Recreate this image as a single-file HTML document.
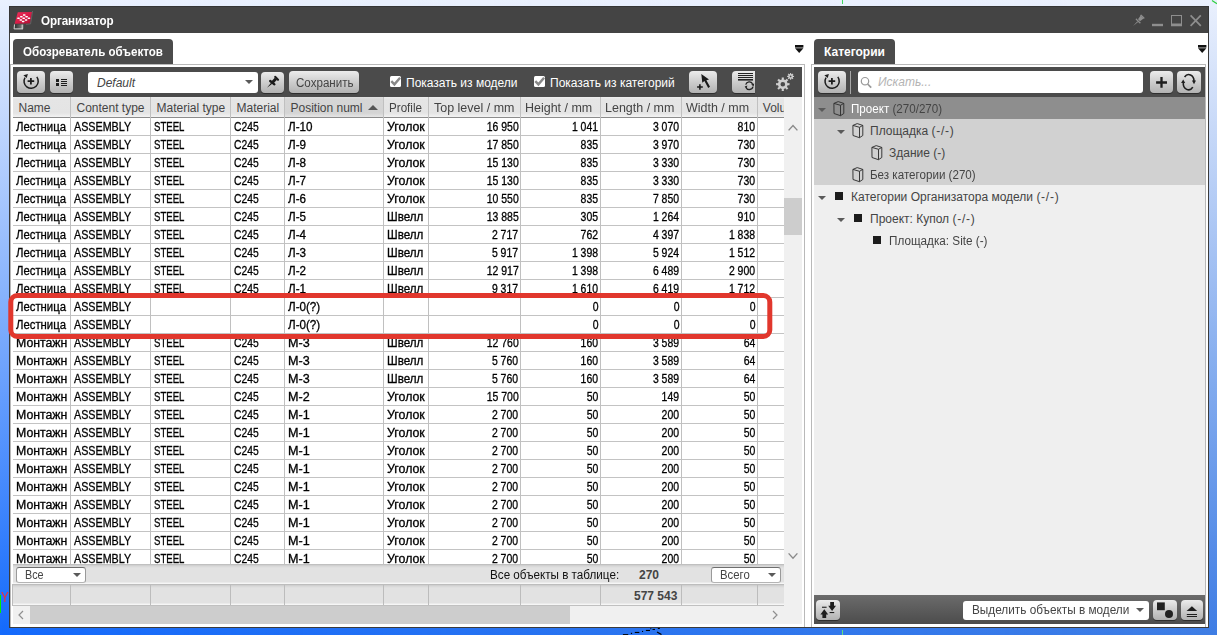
<!DOCTYPE html>
<html lang="ru"><head><meta charset="utf-8"><title>Организатор</title>
<style>
*{box-sizing:border-box;margin:0;padding:0}
html,body{width:1217px;height:635px;overflow:hidden}
body{position:relative;font:12px/14px "Liberation Sans",sans-serif;color:#000;
 background:linear-gradient(to bottom,rgb(234,241,254) 0px,rgb(20,106,252) 635px)}
.abs,body>div,body>span,body>svg{position:absolute}
#bgr{left:0;top:0;width:1217px;height:635px;
 background:linear-gradient(to bottom,rgb(234,240,253) 0px,rgb(62,125,228) 635px);
 -webkit-mask-image:linear-gradient(to right,transparent 0,#000 100%);mask-image:linear-gradient(to right,transparent 0,#000 100%)}
#win{left:9px;top:6px;width:1200px;height:622px;background:#fff;border:1px solid #3b3b3b}
#title{left:9px;top:6px;width:1200px;height:27px;background:#444;border:1px solid #353535;border-bottom:0}
.ttl{left:41px;top:14px;transform:scaleX(.97);transform-origin:0 50%;color:#fff;font-weight:bold;white-space:nowrap;letter-spacing:-.1px}
.tab{top:39px;height:25px;background:#4b4b4b;border-radius:4px 4px 0 0;color:#fff;font-weight:bold;white-space:nowrap}
.tab span{position:absolute;top:6px}
.pborder{border:1px solid #b9b9b9}
.tb{background:#4b4b4b}
.btn{border-radius:4px;background:linear-gradient(to bottom,#ececec 0,#d0d0d0 45%,#b2b2b2 100%);box-shadow:0 1px 0 #2e2e2e}
.btn svg{position:absolute;left:0;top:0}
.inp{background:#fff;border-radius:3px}
.lbl{color:#fff;white-space:nowrap;top:76px}
.cb{width:11px;height:11px;background:#fff;border-radius:1.5px;top:76px}
.t{white-space:nowrap;position:absolute}
/* grid */
#grid{left:13px;top:97px;width:771px;height:467px;overflow:hidden;background:#fff}
#grid .hc{position:absolute;top:0;height:20px;background:linear-gradient(to bottom,#eeeeee 0,#e5e5e5 2px,#e4e4e4 16px,#f3f3f3 20px);color:#444;white-space:nowrap;overflow:hidden;padding:4px 0 0 5.5px}
#grid .hc.srt{background:linear-gradient(to bottom,#e0e0e0 0,#d6d6d6 2px,#d4d4d4 16px,#e6e6e6 20px)}
#grid .hc span{display:inline-block;transform-origin:0 50%}
#grid .h6,#grid .h7,#grid .h8,#grid .h9{transform:scaleX(1.04)}
#grid .h7,#grid .h8,#grid .h9{margin-left:-1.5px}
#grid .h5{transform:scaleX(.97);margin-left:-.3px}
#grid .h6,#grid .h10{margin-left:-.7px}
#grid .row{position:absolute;left:0;width:771px;height:18px;border-bottom:1px solid #c3c3c3}
#grid .cell{position:absolute;top:0;height:17px;white-space:nowrap;overflow:hidden;padding:2px 0 0 3px}
#grid .cell i{-webkit-text-stroke:.3px #000;font-style:normal;display:inline-block;transform-origin:0 50%}
#grid .cell.n{text-align:right;padding:2px 1.5px 0 0}
#grid .cell.n i{transform-origin:100% 50%;transform:scaleX(.87)}
#grid .c0 i{transform:scaleX(.945)}
#grid .c1 i{transform:scaleX(.895)}
#grid .c2 i{transform:scaleX(.80)}
#grid .c3 i{transform:scaleX(.86)}
#grid .c4 i{transform:scaleX(.97)}
#grid .c5 i{transform:scaleX(1.03)}
#grid .mo i{transform:scaleX(1.025)}
#grid .mm i{transform:scaleX(1.05)}
#grid .sh i{transform:scaleX(.968)}
#grid .vl{position:absolute;top:0;width:1px;height:467px;background:#c0c0c0}
#grid .hline{position:absolute;left:0;top:20px;width:771px;height:1px;background:#8c8c8c}
#grid .sortarrow{position:absolute;left:355px;top:8px;width:0;height:0;border-left:5.5px solid transparent;border-right:5.5px solid transparent;border-bottom:5px solid #555}
.combo{background:#fff;border:1px solid #9a9a9a;border-top-color:#6e6e6e;border-bottom-color:#b4b4b4;border-radius:3px;color:#444}
.arr{width:0;height:0;border-left:4px solid transparent;border-right:4px solid transparent;border-top:4.5px solid #5a5a5a}
.trow{left:814px;width:391px;height:22px}
.tt{top:5px;color:#444}
.sq{width:7.7px;height:7.7px;background:#1c1c1c}
.tt u{text-decoration:none;letter-spacing:.75px}
</style></head><body>
<div id="bgr"></div>
<!-- model viewport decorations -->
<div style="left:0;top:595px;width:1px;height:18px;background:#00f000"></div>
<span class="t" style="left:1.2px;top:589px;color:#ff2a2a;font-size:14px;line-height:16px;transform:scaleX(.82);transform-origin:0 50%">Y</span>
<svg style="left:1150px;top:0" width="67" height="8" viewBox="0 0 67 8"><path d="M62 .6 L67 3.8" stroke="#30d040" stroke-width="1.2" fill="none"/></svg>
<div style="left:842px;top:0;width:1px;height:4px;background:#40d860"></div>
<div style="left:842px;top:630px;width:1px;height:5px;background:#60e080"></div>

<svg style="left:620px;top:627px" width="46" height="8" viewBox="0 0 46 8"><g fill="#000"><rect x="2.9" y="7.1" width="5.3" height=".9"/><rect x="10.9" y="5.8" width="1.2" height="1.2"/><rect x="14.8" y="4.9" width="4.5" height="1.1"/><rect x="22" y="3.9" width="1.1" height="1.1"/><rect x="25.9" y="2.9" width="4.1" height="1.1"/><rect x="30.3" y="1.2" width="1" height="1"/><rect x="32.5" y="1.9" width="2.5" height="1"/><rect x="37.8" y="1" width="2" height="1"/></g><path d="M37 5 L41.5 7.6" stroke="#000" stroke-width="1.1" fill="none"/></svg>
<div id="win"></div>
<div id="title"></div>
<svg style="left:13px;top:9px" width="22" height="22" viewBox="0 0 22 22">
<defs><linearGradient id="lg1" x1="0" y1="0" x2="1" y2="1"><stop offset="0" stop-color="#f0305a"/><stop offset=".55" stop-color="#d81a46"/><stop offset="1" stop-color="#a80f32"/></linearGradient>
<linearGradient id="lg2" x1="0" y1="0" x2="1" y2="0"><stop offset="0" stop-color="#2a2a2a"/><stop offset=".7" stop-color="#6a6a6a"/><stop offset="1" stop-color="#d8d8d8"/></linearGradient></defs>
<path d="M4.8 3.3 L19 3 L17 14.6 L1.6 14.8 Z" fill="url(#lg1)"/>
<path d="M19.6 2 L17.6 14.8 L13 15.4" fill="none" stroke="#6e6e6e" stroke-width=".7"/>
<path d="M1.6 15.6 H10.2 V19.8 H1.2 Z" fill="url(#lg2)"/>
<path d="M1.5 15.4 L1.1 19.9 H10" fill="none" stroke="#e6e6e6" stroke-width=".9"/>
<g fill="#fff"><rect x="9.89" y="5.35" width="2.7" height="1.5" rx=".7"/><rect x="7.02" y="6.95" width="2.7" height="1.5" rx=".7"/><rect x="12.22" y="6.95" width="2.7" height="1.5" rx=".7"/><rect x="4.15" y="8.55" width="2.7" height="1.5" rx=".7"/><rect x="9.35" y="8.55" width="2.7" height="1.5" rx=".7"/><rect x="14.55" y="8.55" width="2.7" height="1.5" rx=".7"/><rect x="6.48" y="10.15" width="2.7" height="1.5" rx=".7"/><rect x="11.68" y="10.15" width="2.7" height="1.5" rx=".7"/><rect x="8.81" y="11.75" width="2.7" height="1.5" rx=".7"/></g>
</svg>
<span class="t ttl">Организатор</span>
<svg style="left:1130px;top:12px" width="76" height="17" viewBox="0 0 76 17">
<g fill="#8e8e8e" stroke="none">
<path d="M3 14 L7.4 9.2 L8.2 10 Z"/><path d="M6.2 6.2 L11 11 L9.6 11.6 L5.6 7.6 Z"/><path d="M8 7.2 L10.6 3.6 L13.6 6.6 L10 9.2 Z"/><path d="M10 3.2 L11.2 2.4 L14.6 5.8 L14 7 Z"/>
<rect x="22" y="11.8" width="11" height="2.4"/>
<path d="M41 3 H52 V14.2 H41 Z M42 4 V11.4 H51 V4 Z" fill-rule="evenodd"/>
</g>
<path d="M60.6 3.4 L70.8 13.8 M70.8 3.4 L60.6 13.8" stroke="#8e8e8e" stroke-width="1.7" fill="none"/>
</svg>

<!-- left panel -->
<div class="tab" style="left:13px;width:160px"><span style="left:10px;transform:scaleX(.964);transform-origin:0 50%">Обозреватель объектов</span></div>
<div class="pborder" style="left:10px;top:64px;width:795px;height:563px;border-bottom:0"></div>
<div class="tb" style="left:13px;top:67px;width:789px;height:30px"></div>
<svg style="left:795px;top:45px" width="9" height="9" viewBox="0 0 9 9"><rect x="0" y="0" width="8.4" height="2.6" fill="#111"/><path d="M0 3.3 H8.4 L4.2 8 Z" fill="#111"/></svg>
<div class="btn" style="left:17px;top:71px;width:28px;height:22px"><svg width="28" height="22" viewBox="0 0 28 22"><path d="M19.8 5.9 A7.1 7.1 0 1 1 8 6.6" fill="none" stroke="#1e1e1e" stroke-width="1.5"/><path d="M10.9 2.9 L6.4 4.2 L9.7 6.9 Z" fill="#1e1e1e"/><path d="M10.6 10.1 H17.2 M13.9 7.1 V13.5" stroke="#1e1e1e" stroke-width="1.8" fill="none"/></svg></div>
<div class="btn" style="left:50px;top:71px;width:23px;height:22px"><svg width="23" height="22" viewBox="0 0 23 22"><g fill="#1e1e1e"><rect x="6" y="8" width="3" height="3"/><rect x="6" y="12" width="3" height="3"/><rect x="11" y="8" width="6" height="1"/><rect x="11" y="10" width="6" height="1"/><rect x="11" y="12" width="6" height="1"/><rect x="11" y="14" width="6" height="1"/></g></svg></div>
<div class="inp" style="left:88px;top:72px;width:170px;height:21px"></div>
<span class="t" id="def" style="left:97px;top:76px;font-style:italic;color:#444">Default</span>
<div class="arr" style="left:245px;top:80px"></div>
<div class="btn" style="left:261px;top:72px;width:23px;height:21px"><svg width="23" height="21" viewBox="0 0 23 21"><g stroke="#1a1a1a" fill="none"><path d="M6 15.8 L10.1 10.7 L11.3 11.7 Z" fill="#1a1a1a" stroke="none"/><path d="M9.2 9 L13.4 12.4" stroke-width="2.3" stroke-linecap="round"/><path d="M11.6 10.2 L14.9 6.7" stroke-width="3"/><path d="M14.3 4.9 L17 7.7" stroke-width="2.2" stroke-linecap="round"/></g></svg></div>
<div class="btn" style="left:289px;top:71px;width:70px;height:22px"></div>
<span class="t" id="save" style="left:295.5px;top:76px;color:#444;transform:scaleX(.965);transform-origin:0 50%">Сохранить</span>
<div class="cb" style="left:390px"><svg width="11" height="11" viewBox="0 0 11 11" style="position:absolute;left:0;top:0"><path d="M1.3 5.2 L4.4 8.4 L10.1 1.7" fill="none" stroke="#888" stroke-width="2.4"/></svg></div>
<span class="t lbl" id="l1" style="left:406px">Показать из модели</span>
<div class="cb" style="left:534px"><svg width="11" height="11" viewBox="0 0 11 11" style="position:absolute;left:0;top:0"><path d="M1.3 5.2 L4.4 8.4 L10.1 1.7" fill="none" stroke="#888" stroke-width="2.4"/></svg></div>
<span class="t lbl" id="l2" style="left:550px">Показать из категорий</span>
<div class="btn" style="left:689px;top:71px;width:28px;height:22px"><svg width="28" height="22" viewBox="0 0 28 22"><path d="M12.3 2.9 L13.3 11.8 L15.4 10.1 L19.2 16.9 L21 15.8 L17.4 9.3 L20 8.5 Z" fill="#1a1a1a"/><path d="M8.1 16 H13.8 M10.9 13.2 V18.8" stroke="#1a1a1a" stroke-width="1.6" fill="none"/></svg></div>
<div class="btn" style="left:732px;top:71px;width:23px;height:22px;border-radius:4px 0 0 4px"><svg width="23" height="22" viewBox="0 0 23 22"><g fill="#222"><rect x="6" y="2" width="15" height="1"/><rect x="6" y="4" width="15" height="1"/><rect x="6" y="6" width="15" height="1"/><rect x="6" y="8" width="15" height="1.6"/></g><path d="M13.7 13.6 A3.8 3.8 0 0 1 20.6 12.8" fill="none" stroke="#222" stroke-width="1.3"/><path d="M21 15.6 A3.8 3.8 0 0 1 13.8 16.2" fill="none" stroke="#222" stroke-width="1.3"/><path d="M19.2 13.6 L22.2 12.6 L21.6 15.6 Z" fill="#222"/><path d="M12.6 15.6 L15.4 14.6 L14.4 17.4 Z" fill="#222"/></svg></div>
<svg style="left:775px;top:71px" width="21" height="21" viewBox="0 0 21 21"><path d="M12.59 12.20 L14.51 12.08 L14.51 14.32 L12.59 14.20 L11.90 15.88 L13.33 17.15 L11.75 18.73 L10.48 17.30 L8.80 17.99 L8.92 19.91 L6.68 19.91 L6.80 17.99 L5.12 17.30 L3.85 18.73 L2.27 17.15 L3.70 15.88 L3.01 14.20 L1.09 14.32 L1.09 12.08 L3.01 12.20 L3.70 10.52 L2.27 9.25 L3.85 7.67 L5.12 9.10 L6.80 8.41 L6.68 6.49 L8.92 6.49 L8.80 8.41 L10.48 9.10 L11.75 7.67 L13.33 9.25 L11.90 10.52 Z M10.11 13.20 A2.31 2.31 0 1 0 5.49 13.20 A2.31 2.31 0 1 0 10.11 13.20 Z" fill="#cfcfcf" fill-rule="evenodd"/><path d="M18.07 4.88 L19.05 4.83 L19.05 5.97 L18.07 5.92 L17.71 6.78 L18.45 7.43 L17.63 8.25 L16.98 7.51 L16.12 7.87 L16.17 8.85 L15.03 8.85 L15.08 7.87 L14.22 7.51 L13.57 8.25 L12.75 7.43 L13.49 6.78 L13.13 5.92 L12.15 5.97 L12.15 4.83 L13.13 4.88 L13.49 4.02 L12.75 3.37 L13.57 2.55 L14.22 3.29 L15.08 2.93 L15.03 1.95 L16.17 1.95 L16.12 2.93 L16.98 3.29 L17.63 2.55 L18.45 3.37 L17.71 4.02 Z M16.48 5.40 A0.88 0.88 0 1 0 14.72 5.40 A0.88 0.88 0 1 0 16.48 5.40 Z" fill="#cfcfcf" fill-rule="evenodd"/></svg>
<div id="grid">
<div class="hc" style="left:0px;width:57px"><span class="h0">Name</span></div>
<div class="hc" style="left:58px;width:79px"><span class="h1">Content type</span></div>
<div class="hc" style="left:138px;width:79px"><span class="h2">Material type</span></div>
<div class="hc" style="left:218px;width:53px"><span class="h3">Material</span></div>
<div class="hc srt" style="left:272px;width:98px"><span class="h4">Position numl</span></div>
<div class="hc" style="left:371px;width:44px"><span class="h5">Profile</span></div>
<div class="hc" style="left:416px;width:91px"><span class="h6">Top level / mm</span></div>
<div class="hc" style="left:508px;width:79px"><span class="h7">Height / mm</span></div>
<div class="hc" style="left:588px;width:80px"><span class="h8">Length / mm</span></div>
<div class="hc" style="left:669px;width:75px"><span class="h9">Width / mm</span></div>
<div class="hc" style="left:745px;width:26px"><span class="h10">Volu</span></div>
<div class="sortarrow"></div><div class="hline"></div>
<div class="row" style="top:21px">
<span class="cell c0" style="left:0px;width:57px"><i>Лестница</i></span>
<span class="cell c1" style="left:58px;width:79px"><i>ASSEMBLY</i></span>
<span class="cell c2" style="left:138px;width:79px"><i>STEEL</i></span>
<span class="cell c3" style="left:218px;width:53px"><i>C245</i></span>
<span class="cell c4" style="left:272px;width:98px"><i>Л-10</i></span>
<span class="cell c5" style="left:371px;width:44px"><i>Уголок</i></span>
<span class="cell n" style="left:416px;width:91px"><i>16 950</i></span>
<span class="cell n" style="left:508px;width:79px"><i>1 041</i></span>
<span class="cell n" style="left:588px;width:80px"><i>3 070</i></span>
<span class="cell n" style="left:669px;width:75px"><i>810</i></span>
</div>
<div class="row" style="top:39px">
<span class="cell c0" style="left:0px;width:57px"><i>Лестница</i></span>
<span class="cell c1" style="left:58px;width:79px"><i>ASSEMBLY</i></span>
<span class="cell c2" style="left:138px;width:79px"><i>STEEL</i></span>
<span class="cell c3" style="left:218px;width:53px"><i>C245</i></span>
<span class="cell c4" style="left:272px;width:98px"><i>Л-9</i></span>
<span class="cell c5" style="left:371px;width:44px"><i>Уголок</i></span>
<span class="cell n" style="left:416px;width:91px"><i>17 850</i></span>
<span class="cell n" style="left:508px;width:79px"><i>835</i></span>
<span class="cell n" style="left:588px;width:80px"><i>3 970</i></span>
<span class="cell n" style="left:669px;width:75px"><i>730</i></span>
</div>
<div class="row" style="top:57px">
<span class="cell c0" style="left:0px;width:57px"><i>Лестница</i></span>
<span class="cell c1" style="left:58px;width:79px"><i>ASSEMBLY</i></span>
<span class="cell c2" style="left:138px;width:79px"><i>STEEL</i></span>
<span class="cell c3" style="left:218px;width:53px"><i>C245</i></span>
<span class="cell c4" style="left:272px;width:98px"><i>Л-8</i></span>
<span class="cell c5" style="left:371px;width:44px"><i>Уголок</i></span>
<span class="cell n" style="left:416px;width:91px"><i>15 130</i></span>
<span class="cell n" style="left:508px;width:79px"><i>835</i></span>
<span class="cell n" style="left:588px;width:80px"><i>3 330</i></span>
<span class="cell n" style="left:669px;width:75px"><i>730</i></span>
</div>
<div class="row" style="top:75px">
<span class="cell c0" style="left:0px;width:57px"><i>Лестница</i></span>
<span class="cell c1" style="left:58px;width:79px"><i>ASSEMBLY</i></span>
<span class="cell c2" style="left:138px;width:79px"><i>STEEL</i></span>
<span class="cell c3" style="left:218px;width:53px"><i>C245</i></span>
<span class="cell c4" style="left:272px;width:98px"><i>Л-7</i></span>
<span class="cell c5" style="left:371px;width:44px"><i>Уголок</i></span>
<span class="cell n" style="left:416px;width:91px"><i>15 130</i></span>
<span class="cell n" style="left:508px;width:79px"><i>835</i></span>
<span class="cell n" style="left:588px;width:80px"><i>3 330</i></span>
<span class="cell n" style="left:669px;width:75px"><i>730</i></span>
</div>
<div class="row" style="top:93px">
<span class="cell c0" style="left:0px;width:57px"><i>Лестница</i></span>
<span class="cell c1" style="left:58px;width:79px"><i>ASSEMBLY</i></span>
<span class="cell c2" style="left:138px;width:79px"><i>STEEL</i></span>
<span class="cell c3" style="left:218px;width:53px"><i>C245</i></span>
<span class="cell c4" style="left:272px;width:98px"><i>Л-6</i></span>
<span class="cell c5" style="left:371px;width:44px"><i>Уголок</i></span>
<span class="cell n" style="left:416px;width:91px"><i>10 550</i></span>
<span class="cell n" style="left:508px;width:79px"><i>835</i></span>
<span class="cell n" style="left:588px;width:80px"><i>7 850</i></span>
<span class="cell n" style="left:669px;width:75px"><i>730</i></span>
</div>
<div class="row" style="top:111px">
<span class="cell c0" style="left:0px;width:57px"><i>Лестница</i></span>
<span class="cell c1" style="left:58px;width:79px"><i>ASSEMBLY</i></span>
<span class="cell c2" style="left:138px;width:79px"><i>STEEL</i></span>
<span class="cell c3" style="left:218px;width:53px"><i>C245</i></span>
<span class="cell c4" style="left:272px;width:98px"><i>Л-5</i></span>
<span class="cell c5 sh" style="left:371px;width:44px"><i>Швелл</i></span>
<span class="cell n" style="left:416px;width:91px"><i>13 885</i></span>
<span class="cell n" style="left:508px;width:79px"><i>305</i></span>
<span class="cell n" style="left:588px;width:80px"><i>1 264</i></span>
<span class="cell n" style="left:669px;width:75px"><i>910</i></span>
</div>
<div class="row" style="top:129px">
<span class="cell c0" style="left:0px;width:57px"><i>Лестница</i></span>
<span class="cell c1" style="left:58px;width:79px"><i>ASSEMBLY</i></span>
<span class="cell c2" style="left:138px;width:79px"><i>STEEL</i></span>
<span class="cell c3" style="left:218px;width:53px"><i>C245</i></span>
<span class="cell c4" style="left:272px;width:98px"><i>Л-4</i></span>
<span class="cell c5 sh" style="left:371px;width:44px"><i>Швелл</i></span>
<span class="cell n" style="left:416px;width:91px"><i>2 717</i></span>
<span class="cell n" style="left:508px;width:79px"><i>762</i></span>
<span class="cell n" style="left:588px;width:80px"><i>4 397</i></span>
<span class="cell n" style="left:669px;width:75px"><i>1 838</i></span>
</div>
<div class="row" style="top:147px">
<span class="cell c0" style="left:0px;width:57px"><i>Лестница</i></span>
<span class="cell c1" style="left:58px;width:79px"><i>ASSEMBLY</i></span>
<span class="cell c2" style="left:138px;width:79px"><i>STEEL</i></span>
<span class="cell c3" style="left:218px;width:53px"><i>C245</i></span>
<span class="cell c4" style="left:272px;width:98px"><i>Л-3</i></span>
<span class="cell c5 sh" style="left:371px;width:44px"><i>Швелл</i></span>
<span class="cell n" style="left:416px;width:91px"><i>5 917</i></span>
<span class="cell n" style="left:508px;width:79px"><i>1 398</i></span>
<span class="cell n" style="left:588px;width:80px"><i>5 924</i></span>
<span class="cell n" style="left:669px;width:75px"><i>1 512</i></span>
</div>
<div class="row" style="top:165px">
<span class="cell c0" style="left:0px;width:57px"><i>Лестница</i></span>
<span class="cell c1" style="left:58px;width:79px"><i>ASSEMBLY</i></span>
<span class="cell c2" style="left:138px;width:79px"><i>STEEL</i></span>
<span class="cell c3" style="left:218px;width:53px"><i>C245</i></span>
<span class="cell c4" style="left:272px;width:98px"><i>Л-2</i></span>
<span class="cell c5 sh" style="left:371px;width:44px"><i>Швелл</i></span>
<span class="cell n" style="left:416px;width:91px"><i>12 917</i></span>
<span class="cell n" style="left:508px;width:79px"><i>1 398</i></span>
<span class="cell n" style="left:588px;width:80px"><i>6 489</i></span>
<span class="cell n" style="left:669px;width:75px"><i>2 900</i></span>
</div>
<div class="row" style="top:183px">
<span class="cell c0" style="left:0px;width:57px"><i>Лестница</i></span>
<span class="cell c1" style="left:58px;width:79px"><i>ASSEMBLY</i></span>
<span class="cell c2" style="left:138px;width:79px"><i>STEEL</i></span>
<span class="cell c3" style="left:218px;width:53px"><i>C245</i></span>
<span class="cell c4" style="left:272px;width:98px"><i>Л-1</i></span>
<span class="cell c5 sh" style="left:371px;width:44px"><i>Швелл</i></span>
<span class="cell n" style="left:416px;width:91px"><i>9 317</i></span>
<span class="cell n" style="left:508px;width:79px"><i>1 610</i></span>
<span class="cell n" style="left:588px;width:80px"><i>6 419</i></span>
<span class="cell n" style="left:669px;width:75px"><i>1 712</i></span>
</div>
<div class="row" style="top:201px">
<span class="cell c0" style="left:0px;width:57px"><i>Лестница</i></span>
<span class="cell c1" style="left:58px;width:79px"><i>ASSEMBLY</i></span>
<span class="cell c4" style="left:272px;width:98px"><i>Л-0(?)</i></span>
<span class="cell n" style="left:508px;width:79px"><i>0</i></span>
<span class="cell n" style="left:588px;width:80px"><i>0</i></span>
<span class="cell n" style="left:669px;width:75px"><i>0</i></span>
</div>
<div class="row" style="top:219px">
<span class="cell c0" style="left:0px;width:57px"><i>Лестница</i></span>
<span class="cell c1" style="left:58px;width:79px"><i>ASSEMBLY</i></span>
<span class="cell c4" style="left:272px;width:98px"><i>Л-0(?)</i></span>
<span class="cell n" style="left:508px;width:79px"><i>0</i></span>
<span class="cell n" style="left:588px;width:80px"><i>0</i></span>
<span class="cell n" style="left:669px;width:75px"><i>0</i></span>
</div>
<div class="row" style="top:237px">
<span class="cell c0 mo" style="left:0px;width:57px"><i>Монтажн</i></span>
<span class="cell c1" style="left:58px;width:79px"><i>ASSEMBLY</i></span>
<span class="cell c2" style="left:138px;width:79px"><i>STEEL</i></span>
<span class="cell c3" style="left:218px;width:53px"><i>C245</i></span>
<span class="cell c4 mm" style="left:272px;width:98px"><i>М-3</i></span>
<span class="cell c5 sh" style="left:371px;width:44px"><i>Швелл</i></span>
<span class="cell n" style="left:416px;width:91px"><i>12 760</i></span>
<span class="cell n" style="left:508px;width:79px"><i>160</i></span>
<span class="cell n" style="left:588px;width:80px"><i>3 589</i></span>
<span class="cell n" style="left:669px;width:75px"><i>64</i></span>
</div>
<div class="row" style="top:255px">
<span class="cell c0 mo" style="left:0px;width:57px"><i>Монтажн</i></span>
<span class="cell c1" style="left:58px;width:79px"><i>ASSEMBLY</i></span>
<span class="cell c2" style="left:138px;width:79px"><i>STEEL</i></span>
<span class="cell c3" style="left:218px;width:53px"><i>C245</i></span>
<span class="cell c4 mm" style="left:272px;width:98px"><i>М-3</i></span>
<span class="cell c5 sh" style="left:371px;width:44px"><i>Швелл</i></span>
<span class="cell n" style="left:416px;width:91px"><i>5 760</i></span>
<span class="cell n" style="left:508px;width:79px"><i>160</i></span>
<span class="cell n" style="left:588px;width:80px"><i>3 589</i></span>
<span class="cell n" style="left:669px;width:75px"><i>64</i></span>
</div>
<div class="row" style="top:273px">
<span class="cell c0 mo" style="left:0px;width:57px"><i>Монтажн</i></span>
<span class="cell c1" style="left:58px;width:79px"><i>ASSEMBLY</i></span>
<span class="cell c2" style="left:138px;width:79px"><i>STEEL</i></span>
<span class="cell c3" style="left:218px;width:53px"><i>C245</i></span>
<span class="cell c4 mm" style="left:272px;width:98px"><i>М-3</i></span>
<span class="cell c5 sh" style="left:371px;width:44px"><i>Швелл</i></span>
<span class="cell n" style="left:416px;width:91px"><i>5 760</i></span>
<span class="cell n" style="left:508px;width:79px"><i>160</i></span>
<span class="cell n" style="left:588px;width:80px"><i>3 589</i></span>
<span class="cell n" style="left:669px;width:75px"><i>64</i></span>
</div>
<div class="row" style="top:291px">
<span class="cell c0 mo" style="left:0px;width:57px"><i>Монтажн</i></span>
<span class="cell c1" style="left:58px;width:79px"><i>ASSEMBLY</i></span>
<span class="cell c2" style="left:138px;width:79px"><i>STEEL</i></span>
<span class="cell c3" style="left:218px;width:53px"><i>C245</i></span>
<span class="cell c4 mm" style="left:272px;width:98px"><i>М-2</i></span>
<span class="cell c5" style="left:371px;width:44px"><i>Уголок</i></span>
<span class="cell n" style="left:416px;width:91px"><i>15 700</i></span>
<span class="cell n" style="left:508px;width:79px"><i>50</i></span>
<span class="cell n" style="left:588px;width:80px"><i>149</i></span>
<span class="cell n" style="left:669px;width:75px"><i>50</i></span>
</div>
<div class="row" style="top:309px">
<span class="cell c0 mo" style="left:0px;width:57px"><i>Монтажн</i></span>
<span class="cell c1" style="left:58px;width:79px"><i>ASSEMBLY</i></span>
<span class="cell c2" style="left:138px;width:79px"><i>STEEL</i></span>
<span class="cell c3" style="left:218px;width:53px"><i>C245</i></span>
<span class="cell c4 mm" style="left:272px;width:98px"><i>М-1</i></span>
<span class="cell c5" style="left:371px;width:44px"><i>Уголок</i></span>
<span class="cell n" style="left:416px;width:91px"><i>2 700</i></span>
<span class="cell n" style="left:508px;width:79px"><i>50</i></span>
<span class="cell n" style="left:588px;width:80px"><i>200</i></span>
<span class="cell n" style="left:669px;width:75px"><i>50</i></span>
</div>
<div class="row" style="top:327px">
<span class="cell c0 mo" style="left:0px;width:57px"><i>Монтажн</i></span>
<span class="cell c1" style="left:58px;width:79px"><i>ASSEMBLY</i></span>
<span class="cell c2" style="left:138px;width:79px"><i>STEEL</i></span>
<span class="cell c3" style="left:218px;width:53px"><i>C245</i></span>
<span class="cell c4 mm" style="left:272px;width:98px"><i>М-1</i></span>
<span class="cell c5" style="left:371px;width:44px"><i>Уголок</i></span>
<span class="cell n" style="left:416px;width:91px"><i>2 700</i></span>
<span class="cell n" style="left:508px;width:79px"><i>50</i></span>
<span class="cell n" style="left:588px;width:80px"><i>200</i></span>
<span class="cell n" style="left:669px;width:75px"><i>50</i></span>
</div>
<div class="row" style="top:345px">
<span class="cell c0 mo" style="left:0px;width:57px"><i>Монтажн</i></span>
<span class="cell c1" style="left:58px;width:79px"><i>ASSEMBLY</i></span>
<span class="cell c2" style="left:138px;width:79px"><i>STEEL</i></span>
<span class="cell c3" style="left:218px;width:53px"><i>C245</i></span>
<span class="cell c4 mm" style="left:272px;width:98px"><i>М-1</i></span>
<span class="cell c5" style="left:371px;width:44px"><i>Уголок</i></span>
<span class="cell n" style="left:416px;width:91px"><i>2 700</i></span>
<span class="cell n" style="left:508px;width:79px"><i>50</i></span>
<span class="cell n" style="left:588px;width:80px"><i>200</i></span>
<span class="cell n" style="left:669px;width:75px"><i>50</i></span>
</div>
<div class="row" style="top:363px">
<span class="cell c0 mo" style="left:0px;width:57px"><i>Монтажн</i></span>
<span class="cell c1" style="left:58px;width:79px"><i>ASSEMBLY</i></span>
<span class="cell c2" style="left:138px;width:79px"><i>STEEL</i></span>
<span class="cell c3" style="left:218px;width:53px"><i>C245</i></span>
<span class="cell c4 mm" style="left:272px;width:98px"><i>М-1</i></span>
<span class="cell c5" style="left:371px;width:44px"><i>Уголок</i></span>
<span class="cell n" style="left:416px;width:91px"><i>2 700</i></span>
<span class="cell n" style="left:508px;width:79px"><i>50</i></span>
<span class="cell n" style="left:588px;width:80px"><i>200</i></span>
<span class="cell n" style="left:669px;width:75px"><i>50</i></span>
</div>
<div class="row" style="top:381px">
<span class="cell c0 mo" style="left:0px;width:57px"><i>Монтажн</i></span>
<span class="cell c1" style="left:58px;width:79px"><i>ASSEMBLY</i></span>
<span class="cell c2" style="left:138px;width:79px"><i>STEEL</i></span>
<span class="cell c3" style="left:218px;width:53px"><i>C245</i></span>
<span class="cell c4 mm" style="left:272px;width:98px"><i>М-1</i></span>
<span class="cell c5" style="left:371px;width:44px"><i>Уголок</i></span>
<span class="cell n" style="left:416px;width:91px"><i>2 700</i></span>
<span class="cell n" style="left:508px;width:79px"><i>50</i></span>
<span class="cell n" style="left:588px;width:80px"><i>200</i></span>
<span class="cell n" style="left:669px;width:75px"><i>50</i></span>
</div>
<div class="row" style="top:399px">
<span class="cell c0 mo" style="left:0px;width:57px"><i>Монтажн</i></span>
<span class="cell c1" style="left:58px;width:79px"><i>ASSEMBLY</i></span>
<span class="cell c2" style="left:138px;width:79px"><i>STEEL</i></span>
<span class="cell c3" style="left:218px;width:53px"><i>C245</i></span>
<span class="cell c4 mm" style="left:272px;width:98px"><i>М-1</i></span>
<span class="cell c5" style="left:371px;width:44px"><i>Уголок</i></span>
<span class="cell n" style="left:416px;width:91px"><i>2 700</i></span>
<span class="cell n" style="left:508px;width:79px"><i>50</i></span>
<span class="cell n" style="left:588px;width:80px"><i>200</i></span>
<span class="cell n" style="left:669px;width:75px"><i>50</i></span>
</div>
<div class="row" style="top:417px">
<span class="cell c0 mo" style="left:0px;width:57px"><i>Монтажн</i></span>
<span class="cell c1" style="left:58px;width:79px"><i>ASSEMBLY</i></span>
<span class="cell c2" style="left:138px;width:79px"><i>STEEL</i></span>
<span class="cell c3" style="left:218px;width:53px"><i>C245</i></span>
<span class="cell c4 mm" style="left:272px;width:98px"><i>М-1</i></span>
<span class="cell c5" style="left:371px;width:44px"><i>Уголок</i></span>
<span class="cell n" style="left:416px;width:91px"><i>2 700</i></span>
<span class="cell n" style="left:508px;width:79px"><i>50</i></span>
<span class="cell n" style="left:588px;width:80px"><i>200</i></span>
<span class="cell n" style="left:669px;width:75px"><i>50</i></span>
</div>
<div class="row" style="top:435px">
<span class="cell c0 mo" style="left:0px;width:57px"><i>Монтажн</i></span>
<span class="cell c1" style="left:58px;width:79px"><i>ASSEMBLY</i></span>
<span class="cell c2" style="left:138px;width:79px"><i>STEEL</i></span>
<span class="cell c3" style="left:218px;width:53px"><i>C245</i></span>
<span class="cell c4 mm" style="left:272px;width:98px"><i>М-1</i></span>
<span class="cell c5" style="left:371px;width:44px"><i>Уголок</i></span>
<span class="cell n" style="left:416px;width:91px"><i>2 700</i></span>
<span class="cell n" style="left:508px;width:79px"><i>50</i></span>
<span class="cell n" style="left:588px;width:80px"><i>200</i></span>
<span class="cell n" style="left:669px;width:75px"><i>50</i></span>
</div>
<div class="row" style="top:453px">
<span class="cell c0 mo" style="left:0px;width:57px"><i>Монтажн</i></span>
<span class="cell c1" style="left:58px;width:79px"><i>ASSEMBLY</i></span>
<span class="cell c2" style="left:138px;width:79px"><i>STEEL</i></span>
<span class="cell c3" style="left:218px;width:53px"><i>C245</i></span>
<span class="cell c4 mm" style="left:272px;width:98px"><i>М-1</i></span>
<span class="cell c5" style="left:371px;width:44px"><i>Уголок</i></span>
<span class="cell n" style="left:416px;width:91px"><i>2 700</i></span>
<span class="cell n" style="left:508px;width:79px"><i>50</i></span>
<span class="cell n" style="left:588px;width:80px"><i>200</i></span>
<span class="cell n" style="left:669px;width:75px"><i>50</i></span>
</div>
<div class="vl" style="left:57px"></div>
<div class="vl" style="left:137px"></div>
<div class="vl" style="left:217px"></div>
<div class="vl" style="left:271px"></div>
<div class="vl" style="left:370px"></div>
<div class="vl" style="left:415px"></div>
<div class="vl" style="left:507px"></div>
<div class="vl" style="left:587px"></div>
<div class="vl" style="left:668px"></div>
<div class="vl" style="left:744px"></div>
</div>
<div style="left:784px;top:97px;width:18px;height:527px;background:#f0f0f0"></div>
<div style="left:784px;top:198px;width:18px;height:37px;background:#cdcdcd"></div>
<svg style="left:784px;top:118px" width="18" height="18" viewBox="0 0 18 18"><path d="M4.6 12.4 L9 7.6 L13.4 12.4" fill="none" stroke="#8a8a8a" stroke-width="1.4"/></svg>
<svg style="left:784px;top:547px" width="18" height="18" viewBox="0 0 18 18"><path d="M4.6 6.4 L9 11.2 L13.4 6.4" fill="none" stroke="#8a8a8a" stroke-width="1.4"/></svg>
<div style="left:13px;top:564px;width:771px;height:20px;background:linear-gradient(to bottom,#c0c0c0 0,#c0c0c0 1px,#d0d0d0 1px,#d0d0d0 2px,#d9d9d9 2px,#d9d9d9 3px,#dfdfdf 3px,#dfdfdf 4px,#e2e2e2 4px,#e2e2e2 18px,#ebebeb 18px,#ebebeb 19px,#f6f6f6 19px)"></div>
<div class="combo" style="left:16px;top:567px;width:70px;height:16px"></div>
<span class="t" id="vse" style="left:25px;top:568px;color:#444;transform:scaleX(.9);transform-origin:0 50%">Все</span>
<div class="arr" style="left:73px;top:573px"></div>
<span class="t" id="allobj" style="left:490px;top:568px;color:#111;transform:scaleX(.973);transform-origin:0 50%">Все объекты в таблице:</span>
<span class="t" id="n270" style="left:639px;top:568px;color:#444;font-weight:bold">270</span>
<div class="combo" style="left:711px;top:567px;width:70px;height:16px"></div>
<span class="t" id="vsego" style="left:720px;top:568px;color:#444;transform:scaleX(.945);transform-origin:0 50%">Всего</span>
<div class="arr" style="left:768px;top:573px"></div>
<div style="left:13px;top:584px;width:771px;height:22px;background:linear-gradient(to bottom,#bdbdbd 0,#bdbdbd 1px,#d0d0d0 1px,#d0d0d0 2px,#d9d9d9 2px,#d9d9d9 3px,#dfdfdf 3px,#dfdfdf 4px,#e2e2e2 4px,#e2e2e2 19px,#ebebeb 19px,#ebebeb 20px,#f6f6f6 20px,#f6f6f6 21px,#c0c0c0 21px)"></div>
<div style="left:70px;top:585px;width:1px;height:20px;background:#bcbcbc"></div><div style="left:150px;top:585px;width:1px;height:20px;background:#bcbcbc"></div><div style="left:230px;top:585px;width:1px;height:20px;background:#bcbcbc"></div><div style="left:284px;top:585px;width:1px;height:20px;background:#bcbcbc"></div><div style="left:383px;top:585px;width:1px;height:20px;background:#bcbcbc"></div><div style="left:428px;top:585px;width:1px;height:20px;background:#bcbcbc"></div><div style="left:520px;top:585px;width:1px;height:20px;background:#bcbcbc"></div><div style="left:600px;top:585px;width:1px;height:20px;background:#bcbcbc"></div><div style="left:681px;top:585px;width:1px;height:20px;background:#bcbcbc"></div><div style="left:757px;top:585px;width:1px;height:20px;background:#bcbcbc"></div>
<div style="left:12px;top:584px;width:1px;height:22px;background:#bcbcbc"></div>
<span class="t" id="sum" style="left:634px;top:589px;color:#444;font-weight:bold">577 543</span>
<div style="left:13px;top:606px;width:771px;height:18px;background:#f0f0f0"></div>
<div style="left:30px;top:606px;width:540px;height:18px;background:#cdcdcd"></div>
<svg style="left:13px;top:606px" width="17" height="18" viewBox="0 0 17 18"><path d="M10 5 L6 9 L10 13" fill="none" stroke="#8f8f8f" stroke-width="1.2"/></svg>
<svg style="left:766px;top:606px" width="17" height="18" viewBox="0 0 17 18"><path d="M7 5 L11 9 L7 13" fill="none" stroke="#8f8f8f" stroke-width="1.2"/></svg>

<!-- right panel -->
<div class="tab" style="left:814px;width:81px"><span style="left:10px">Категории</span></div>
<div class="pborder" style="left:811px;top:64px;width:395px;height:563px;border-bottom:0"></div>
<div class="tb" style="left:814px;top:67px;width:391px;height:30px"></div>
<svg style="left:1198px;top:45px" width="9" height="9" viewBox="0 0 9 9"><rect x="0" y="0" width="8.4" height="2.6" fill="#111"/><path d="M0 3.3 H8.4 L4.2 8 Z" fill="#111"/></svg>
<div class="btn" style="left:818px;top:71px;width:28px;height:22px"><svg width="28" height="22" viewBox="0 0 28 22"><path d="M19.8 5.9 A7.1 7.1 0 1 1 8 6.6" fill="none" stroke="#1e1e1e" stroke-width="1.5"/><path d="M10.9 2.9 L6.4 4.2 L9.7 6.9 Z" fill="#1e1e1e"/><path d="M10.6 10.1 H17.2 M13.9 7.1 V13.5" stroke="#1e1e1e" stroke-width="1.8" fill="none"/></svg></div>
<div style="left:850px;top:71px;width:1px;height:23px;background:#a8a8a8"></div>
<div class="inp" style="left:858px;top:71px;width:285px;height:22px"></div>
<svg style="left:860px;top:76px" width="13" height="13" viewBox="0 0 13 13"><circle cx="5" cy="5.2" r="3.7" fill="none" stroke="#999" stroke-width="1.2"/><path d="M7.6 8 L11.2 11.6" stroke="#999" stroke-width="1.7"/></svg>
<span class="t" id="srch" style="left:878px;top:75px;font-style:italic;color:#b4b4b4">Искать...</span>
<div class="btn" style="left:1150px;top:71px;width:23px;height:22px"><svg width="23" height="22" viewBox="0 0 23 22"><path d="M6.1 11.5 H17 M11.5 6.1 V16.8" stroke="#1e1e1e" stroke-width="2.3" fill="none"/></svg></div>
<div class="btn" style="left:1177px;top:71px;width:24px;height:22px"><svg width="24" height="22" viewBox="0 0 24 22"><path d="M7.6 6 A5.3 6.6 0 0 1 17 10.2" fill="none" stroke="#1e1e1e" stroke-width="1.6"/><path d="M15.8 16.2 A5.3 6.6 0 0 1 6.3 11.6" fill="none" stroke="#1e1e1e" stroke-width="1.6"/><path d="M14.9 9.6 L19 9.6 L17 13.2 Z" fill="#1e1e1e"/><path d="M4.1 11.9 L8.2 11.9 L6.2 8.4 Z" fill="#1e1e1e"/></svg></div>
<div style="left:814px;top:97px;width:391px;height:498px;background:#efefef"></div>
<div class="trow" style="top:97px;background:#8e8e8e"><div class="arr" style="position:absolute;left:4px;top:11px"></div><svg width="12" height="16" viewBox="0 0 12 16" style="position:absolute;left:19px;top:4px"><path d="M.9 2.4 L5.2 .6 L10.8 2.4 L7.5 4.3 Z M.9 2.4 L1 12.5 L7.5 14.7 L10.8 12.5 L10.8 2.4 M7.5 4.3 V14.7" fill="none" stroke="#303030" stroke-width=".95" stroke-linejoin="round"/></svg><span class="t tt" id="t0" style="left:37px; transform:scaleX(.967);transform-origin:0 50%;"><b style="font-weight:normal;color:#fff">Проект</b> (270/270)</span></div>
<div class="trow" style="top:119px;background:#d1d1d1"><div class="arr" style="position:absolute;left:23px;top:11px"></div><svg width="12" height="16" viewBox="0 0 12 16" style="position:absolute;left:38px;top:4px"><path d="M.9 2.4 L5.2 .6 L10.8 2.4 L7.5 4.3 Z M.9 2.4 L1 12.5 L7.5 14.7 L10.8 12.5 L10.8 2.4 M7.5 4.3 V14.7" fill="none" stroke="#303030" stroke-width=".95" stroke-linejoin="round"/></svg><span class="t tt" id="t1" style="left:56px;">Площадка <u>(-/-)</u></span></div>
<div class="trow" style="top:141px;background:#d1d1d1"><svg width="12" height="16" viewBox="0 0 12 16" style="position:absolute;left:57px;top:4px"><path d="M.9 2.4 L5.2 .6 L10.8 2.4 L7.5 4.3 Z M.9 2.4 L1 12.5 L7.5 14.7 L10.8 12.5 L10.8 2.4 M7.5 4.3 V14.7" fill="none" stroke="#303030" stroke-width=".95" stroke-linejoin="round"/></svg><span class="t tt" id="t2" style="left:75px;">Здание (-)</span></div>
<div class="trow" style="top:163px;background:#d1d1d1"><svg width="12" height="16" viewBox="0 0 12 16" style="position:absolute;left:38px;top:4px"><path d="M.9 2.4 L5.2 .6 L10.8 2.4 L7.5 4.3 Z M.9 2.4 L1 12.5 L7.5 14.7 L10.8 12.5 L10.8 2.4 M7.5 4.3 V14.7" fill="none" stroke="#303030" stroke-width=".95" stroke-linejoin="round"/></svg><span class="t tt" id="t3" style="left:56px; transform:scaleX(.967);transform-origin:0 50%;">Без категории (270)</span></div>
<div class="trow" style="top:185px;background:#efefef"><div class="arr" style="position:absolute;left:4px;top:11px"></div><div class="sq" style="position:absolute;left:21px;top:7px"></div><span class="t tt" id="t4" style="left:37px;">Категории Организатора модели <u>(-/-)</u></span></div>
<div class="trow" style="top:207px;background:#efefef"><div class="arr" style="position:absolute;left:23px;top:11px"></div><div class="sq" style="position:absolute;left:40px;top:7px"></div><span class="t tt" id="t5" style="left:56px;">Проект: Купол <u>(-/-)</u></span></div>
<div class="trow" style="top:229px;background:#efefef"><div class="sq" style="position:absolute;left:59px;top:7px"></div><span class="t tt" id="t6" style="left:75px; transform:scaleX(.977);transform-origin:0 50%;">Площадка: Site (-)</span></div>
<div style="left:814px;top:595px;width:391px;height:29px;background:linear-gradient(to bottom,#6b6b6b,#4c4c4c)"></div>
<div class="btn" style="left:816px;top:600px;width:24px;height:20px"><svg width="24" height="20" viewBox="0 0 24 20"><g fill="#1e1e1e"><path d="M14.2 2 H18 V5.8 H20 L16.1 11 L12.2 5.8 H14.2 Z"/><rect x="13.6" y="12" width="4.6" height="1.1"/><path d="M6.4 18 H10.2 V14.4 H12.2 L8.3 9.2 L4.4 14.4 H6.4 Z"/><rect x="6" y="6.7" width="4.6" height="1.1"/></g></svg></div>
<div class="inp" style="left:963px;top:601px;width:186px;height:19px"></div>
<span class="t" id="sel" style="left:972px;top:603px;color:#444;transform:scaleX(.982);transform-origin:0 50%">Выделить объекты в модели</span>
<div class="arr" style="left:1136px;top:608px"></div>
<div class="btn" style="left:1153px;top:600px;width:24px;height:20px"><svg width="24" height="20" viewBox="0 0 24 20"><rect x="4" y="2.4" width="7.8" height="7.8" fill="#222"/><circle cx="16" cy="14" r="4" fill="#222"/></svg></div>
<div class="btn" style="left:1181px;top:600px;width:22px;height:20px"><svg width="22" height="20" viewBox="0 0 22 20"><g fill="#1e1e1e"><path d="M5.6 11 H16.2 L10.9 6.2 Z"/><rect x="5.8" y="14" width="10.2" height="1"/><rect x="5.8" y="16" width="10.2" height="1"/></g></svg></div>

<!-- annotation -->
<svg style="left:0;top:285px" width="790" height="62" viewBox="0 0 790 62"><rect x="10.8" y="10.5" width="759" height="41" rx="6.5" ry="6.5" fill="none" stroke="#e1372d" stroke-width="5"/></svg>
</body></html>
